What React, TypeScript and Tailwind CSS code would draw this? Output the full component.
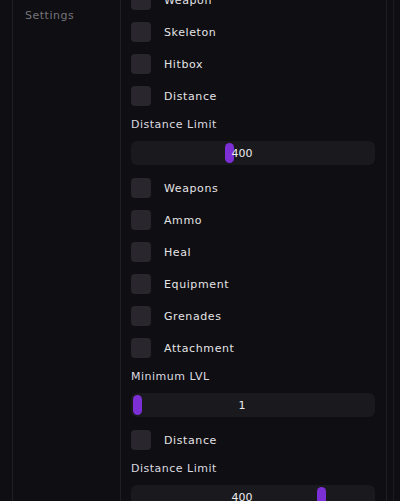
import React from 'react';

// settings panel: checkbox rows + value sliders

type Item =
  | { kind: 'check'; label: string }
  | { kind: 'slider'; label: string; value: string; thumb: number };

const ITEMS: Item[] = [
  { kind: 'check', label: 'Weapon' },
  { kind: 'check', label: 'Skeleton' },
  { kind: 'check', label: 'Hitbox' },
  { kind: 'check', label: 'Distance' },
  { kind: 'slider', label: 'Distance Limit', value: '400', thumb: 94 },
  { kind: 'check', label: 'Weapons' },
  { kind: 'check', label: 'Ammo' },
  { kind: 'check', label: 'Heal' },
  { kind: 'check', label: 'Equipment' },
  { kind: 'check', label: 'Grenades' },
  { kind: 'check', label: 'Attachment' },
  { kind: 'slider', label: 'Minimum LVL', value: '1', thumb: 2 },
  { kind: 'check', label: 'Distance' },
  { kind: 'slider', label: 'Distance Limit', value: '400', thumb: 186 },
];

const CheckRow: React.FC<{ label: string }> = ({ label }) => (
  <div className="flex items-center h-5 mb-3 shrink-0">
    <div className="w-5 h-5 rounded-[4px] bg-[#29272d]" />
    <span className="ml-[13px] text-[11px] leading-none tracking-[0.6px] text-[#e4e3e6]">{label}</span>
  </div>
);

const SliderRow: React.FC<{ label: string; value: string; thumb: number }> = ({ label, value, thumb }) => (
  <div className="flex flex-col mb-[13px] shrink-0">
    <span className="h-[14px] leading-[14px] text-[11px] tracking-[0.5px] text-[#dcdbe0]">{label}</span>
    <div className="relative mt-[9px] h-6 w-[244px] rounded-md bg-[#1a191e]">
      <div className="absolute top-[2px] h-5 w-[9px] rounded-full bg-[#7b2fd4]" style={{ left: thumb }} />
      <div className="absolute inset-y-0 left-0 right-[22px] flex items-center justify-center text-[11px] leading-none text-[#ececec]">
        {value}
      </div>
    </div>
  </div>
);

export default function App() {
  return (
    <div
      className="flex w-[400px] h-[501px] overflow-hidden bg-[#0f0e12]"
      style={{ fontFamily: '"DejaVu Sans", "Liberation Sans", sans-serif' }}
    >
      <div className="w-[121px] h-full pl-3 shrink-0">
        <div className="h-full border-l border-r border-[#1f1e24] pl-3 pt-[2px]">
          <span className="text-[11px] leading-none tracking-[0.5px] text-[#75747a]">Settings</span>
        </div>
      </div>

      <div className="w-[265px] h-full pl-[10px] flex flex-col shrink-0">
        <div className="mt-[-10px] flex flex-col">
          {ITEMS.map((it, i) =>
            it.kind === 'check' ? (
              <CheckRow key={i} label={it.label} />
            ) : (
              <SliderRow key={i} label={it.label} value={it.value} thumb={it.thumb} />
            )
          )}
        </div>
      </div>

      <div className="flex-1 h-full border-l border-[#1f1e24] pl-[6px]">
        <div className="h-full border-l border-[#1c1b20]" />
      </div>
    </div>
  );
}
